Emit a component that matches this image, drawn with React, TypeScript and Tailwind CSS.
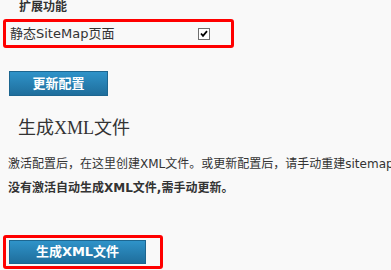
export default function App() {
  const cjk = '"DejaVu Sans", "Noto Sans CJK SC", sans-serif';
  return (
    <div
      className="w-[391px] h-[270px] overflow-hidden bg-[#f9f9f9] text-[12px] text-[#333]"
      style={{ fontFamily: cjk }}
    >
      {/* 扩展功能 */}
      <div className="pl-[19px] pt-[1px] h-[19px] leading-[13px] font-bold">扩展功能</div>

      <div className="ml-[3px] w-[231px] h-[29px] border-[3px] border-[#ff0000] rounded-[3px] flex items-center">
        <span className="pl-[4px] text-[13px] leading-[14px] w-[192px]">静态SiteMap页面</span>
        <span className="w-[12px] h-[12px] border border-[#6f6f6f] bg-white flex items-center justify-center">
          <svg width="8" height="8" viewBox="0 0 8 8">
            <path d="M1 3.5 L3 5.8 L7 1.2" stroke="#000" strokeWidth="1.8" fill="none" />
          </svg>
        </span>
      </div>

      {/* 更新配置 */}
      <div className="pl-[9px] pt-[23px]">
        <button className="w-[99px] h-[25px] border border-[#1d6690] bg-gradient-to-b from-[#2f93c9] to-[#1f6e9c] text-white font-bold text-[13px] leading-[23px]">
          更新配置
        </button>
      </div>

      <div
        className="pl-[18px] pt-[21px] text-[18px] leading-[22px] text-[#333]"
        style={{ fontFamily: '"Liberation Serif", "Noto Sans CJK SC", serif' }}
      >
        生成XML文件
      </div>

      <div className="pl-[8px] pt-[18px] whitespace-nowrap leading-[14px]">
        激活配置后，在这里创建XML文件。或更新配置后，请手动重建sitemap
      </div>
      <div className="pl-[8px] pt-[10px] whitespace-nowrap leading-[14px] font-bold">
        没有激活自动生成XML文件,需手动更新。
      </div>

      <div className="ml-[3px] mt-[40px] w-[160px] h-[34px] border-[3px] border-[#ff0000] rounded-[3px] pl-[3px] pt-[2px]">
        <button className="w-[137px] h-[24px] border border-[#1d6690] bg-gradient-to-b from-[#2f93c9] to-[#1f6e9c] text-white font-bold text-[13px] leading-[22px]">
          生成XML文件
        </button>
      </div>
    </div>
  );
}
